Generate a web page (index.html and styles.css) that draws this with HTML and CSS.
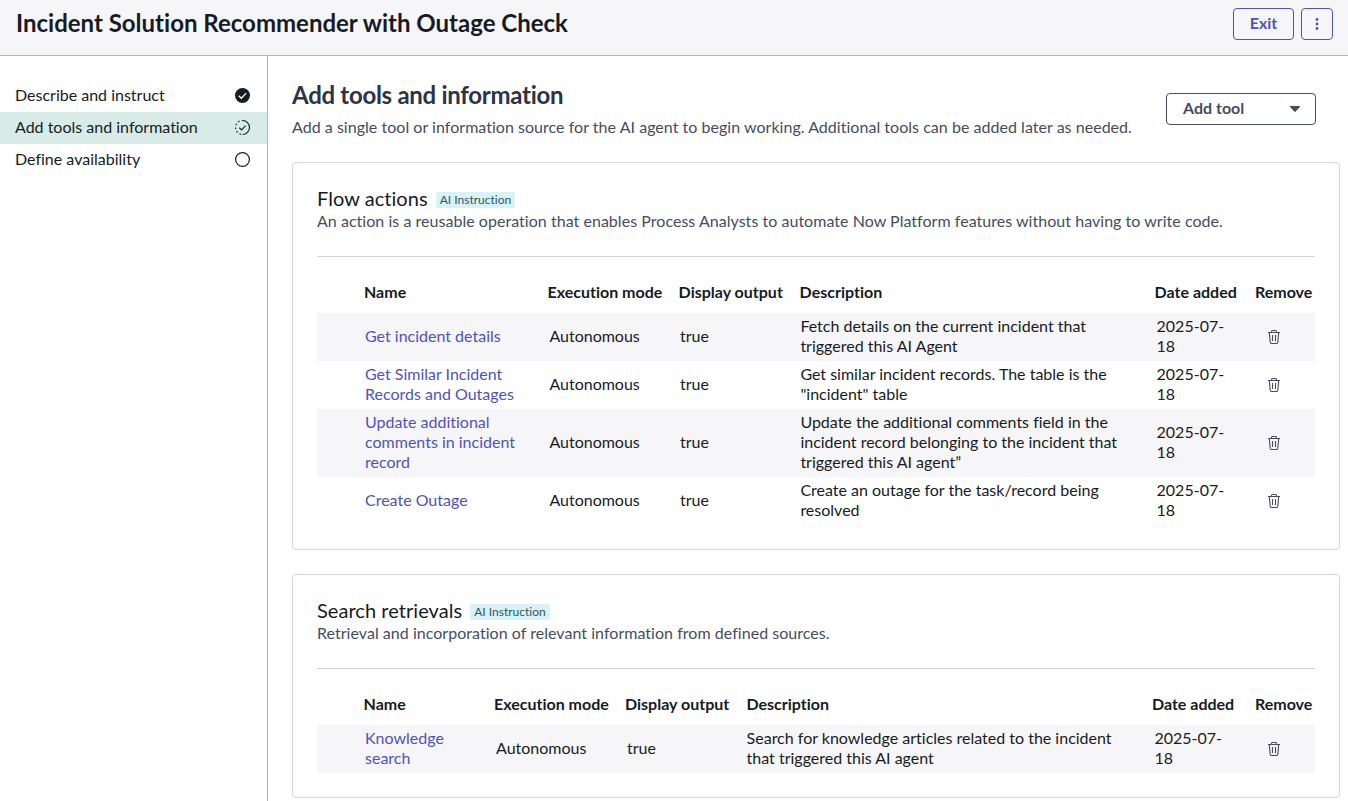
FILE: index.html
```html
<!DOCTYPE html>
<html lang="en">
<head>
<meta charset="utf-8">
<title>Incident Solution Recommender with Outage Check</title>
<link rel="stylesheet" href="styles.css">
</head>
<body>
<svg width="0" height="0" class="defs">
  <symbol id="trash" viewBox="0 0 16 16">
    <g fill="none" stroke="currentColor" stroke-width="1.1">
      <path d="M2 3.500h12M5.500 3.500v-1a1 1 0 0 1 1-1h3a1 1 0 0 1 1 1v1M3.300 3.500l.9 9.800a1.200 1.200 0 0 0 1.200 1.200h5.200a1.200 1.200 0 0 0 1.200-1.200l.9-9.800M6.500 6v6M9.500 6v6"/>
    </g>
  </symbol>
</svg>
<header class="topbar">
  <h1 class="topbar-title">Incident Solution Recommender with Outage Check</h1>
  <div class="topbar-actions">
    <button class="btn btn-exit">Exit</button>
    <button class="btn btn-more" aria-label="More"><svg width="16" height="16" viewBox="0 0 16 16" fill="currentColor"><circle cx="8" cy="3.500" r="1.400"/><circle cx="8" cy="8" r="1.400"/><circle cx="8" cy="12.500" r="1.400"/></svg></button>
  </div>
</header>
<div class="layout">
  <nav class="steps">
    <a class="step"><span>Describe and instruct</span>
      <svg width="16" height="16" viewBox="0 0 16 16"><circle cx="7.500" cy="7.500" r="7.500" fill="#161b26"/><path d="M3.800 7.800l2.500 2.500 4.900-5.200" fill="none" stroke="#fff" stroke-width="1.300"/></svg></a>
    <a class="step step-active"><span>Add tools and information</span>
      <svg width="16" height="16" viewBox="0.500 0.500 16 16" fill="none" stroke="#1d2b2f"><path d="M8 1a7 7 0 0 1 0 14" stroke-width="1.200"/><path d="M8 15A7 7 0 0 1 8 1" stroke-width="1.200" stroke-dasharray="1.700 2.200" stroke-dashoffset="-1.500"/><path d="M4.800 8.200l2.300 2.200 4-4.300" stroke-width="1.200"/></svg></a>
    <a class="step"><span>Define availability</span>
      <svg width="16" height="16" viewBox="0 0 16 16"><circle cx="7.500" cy="7.500" r="6.900" fill="none" stroke="#161b26" stroke-width="1.200"/></svg></a>
  </nav>
  <main class="main">
    <section class="intro">
      <div>
        <h2 class="intro-title">Add tools and information</h2>
        <p class="intro-text">Add a single tool or information source for the AI agent to begin working. Additional tools can be added later as needed.</p>
      </div>
      <button class="btn btn-add"><span>Add tool</span><svg width="12" height="6" viewBox="0 0 12 6"><path d="M1.200 0h9.600q.9 0 .3.700L6.700 5.600q-.7.600-1.400 0L.9.700Q.3 0 1.200 0z" fill="currentColor"/></svg></button>
    </section>

    <section class="card">
      <div class="card-head"><h3 class="card-title">Flow actions</h3><span class="tag">AI Instruction</span></div>
      <p class="card-text">An action is a reusable operation that enables Process Analysts to automate Now Platform features without having to write code.</p>
      <div class="table flow">
        <div class="row row-head"><b>Name</b><b>Execution mode</b><b>Display output</b><b>Description</b><b>Date added</b><b>Remove</b></div>
        <div class="row"><a>Get incident details</a><span>Autonomous</span><span>true</span><span>Fetch details on the current incident that<br>triggered this AI Agent</span><span>2025-07-<br>18</span><svg class="trash"><use href="#trash"/></svg></div>
        <div class="row"><a>Get Similar Incident<br>Records and Outages</a><span>Autonomous</span><span>true</span><span>Get similar incident records. The table is the<br>"incident" table</span><span>2025-07-<br>18</span><svg class="trash"><use href="#trash"/></svg></div>
        <div class="row"><a>Update additional<br>comments in incident<br>record</a><span>Autonomous</span><span>true</span><span>Update the additional comments field in the<br>incident record belonging to the incident that<br>triggered this AI agent”</span><span>2025-07-<br>18</span><svg class="trash"><use href="#trash"/></svg></div>
        <div class="row"><a>Create Outage</a><span>Autonomous</span><span>true</span><span>Create an outage for the task/record being<br>resolved</span><span>2025-07-<br>18</span><svg class="trash"><use href="#trash"/></svg></div>
      </div>
    </section>

    <section class="card">
      <div class="card-head"><h3 class="card-title">Search retrievals</h3><span class="tag">AI Instruction</span></div>
      <p class="card-text">Retrieval and incorporation of relevant information from defined sources.</p>
      <div class="table search">
        <div class="row row-head"><b>Name</b><b>Execution mode</b><b>Display output</b><b>Description</b><b>Date added</b><b>Remove</b></div>
        <div class="row"><a>Knowledge<br>search</a><span>Autonomous</span><span>true</span><span>Search for knowledge articles related to the incident<br>that triggered this AI agent</span><span>2025-07-<br>18</span><svg class="trash"><use href="#trash"/></svg></div>
      </div>
    </section>
  </main>
</div>
</body>
</html>
```
FILE: styles.css
```css
* { box-sizing: border-box; }
body { margin: 0; height: 801px; overflow: hidden; display: flex; flex-direction: column; background: #fff; color: #161b26; font: 16px/20px Lato, sans-serif; font-variant-ligatures: none; white-space: nowrap; }
h1, h2, h3, p { margin: 0; }
.defs { display: none; }
.topbar { flex: none; display: flex; justify-content: space-between; align-items: flex-start; height: 56px; padding: 8px 15px 0 16px; background: #f6f6f8; border-bottom: 1px solid #b1b3be; }
.topbar-title { font-size: 24px; line-height: 30px; font-weight: 700; }
.topbar-actions { display: flex; gap: 7px; }
.btn { display: flex; align-items: center; justify-content: center; height: 32px; padding: 0 0 2px; border: 1px solid #4f52bd; border-radius: 4px; background: transparent; color: #4f52bd; font: 700 16px/20px Lato, sans-serif; }
.btn-exit { width: 61px; }
.btn-more { width: 32px; padding: 0; }
.btn-add { width: 150px; margin-top: 13px; padding: 0 14px 2px 16px; justify-content: space-between; border-color: #454d5f; color: #454d5f; }
.btn-add svg { margin-top: 2px; }
.layout { flex: 1; min-height: 0; display: flex; }
.steps { flex: none; width: 268px; padding-top: 24px; border-right: 1px solid #b1b3be; }
.step { display: flex; align-items: center; justify-content: space-between; height: 32px; padding: 0 16px 0 15px; }
.step span { padding-bottom: 2px; }
.step-active { background: #d8ebe6; }
.main { flex: 1; padding: 24px 8px 0 24px; }
.intro { display: flex; justify-content: space-between; height: 82px; padding-right: 24px; }
.intro-title { font-size: 24px; line-height: 30px; font-weight: 700; letter-spacing: -0.28px; color: #2c3346; }
.intro-text { margin-top: 7px; color: #454d5f; letter-spacing: 0.032px; }
.card { border: 1px solid #d5d7df; border-radius: 4px; padding: 24px; margin-bottom: 24px; }
.card-head { display: flex; align-items: center; gap: 8px; height: 24px; }
.card-title { padding-bottom: 2px; font-size: 20px; line-height: 24px; font-weight: 400; letter-spacing: 0.05px; }
.tag { height: 16px; padding: 0 4px; margin-top: 2px; border-radius: 2px; background: #d7f3f8; color: #35545c; font-size: 12px; line-height: 16px; }
.card-text { color: #454d5f; letter-spacing: 0.035px; }
.table { margin-top: 25px; border-top: 1px solid #d0d3dc; padding-top: 16px; }
.row { display: grid; align-items: center; padding: 3px 0 5px 48px; }
.flow .row { grid-template-columns: 184.400px 130.600px 120.400px 356.200px 109.400px 1fr; }
.search .row { grid-template-columns: 131px 131px 119.600px 407.900px 111.500px 1fr; }
.row:nth-child(even) { background: #f6f6f8; }
.row a { color: #4f52bd; }
.flow .row-head { height: 40px; padding-left: 47px; grid-template-columns: 183.500px 131.100px 121px 355px 100.400px 1fr; }
.search .row-head { height: 40px; padding-left: 46.600px; grid-template-columns: 130.400px 131px 121.400px 405.600px 103px 1fr; }
.trash { width: 16px; height: 16px; margin-top: 2px; color: #454d5f; }
```
